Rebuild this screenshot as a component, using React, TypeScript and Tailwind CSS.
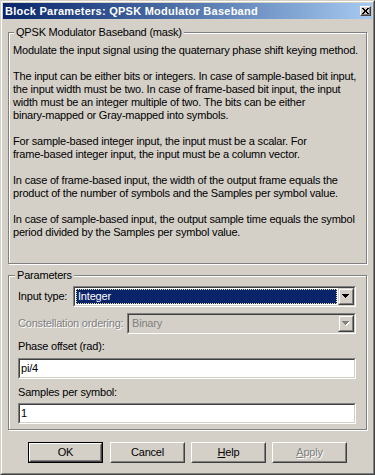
import React from "react";

function Arrow({ disabled }: { disabled?: boolean }) {
  const rows = [
    [0, 7],
    [1, 5],
    [2, 3],
    [3, 1],
  ];
  return (
    <svg width="8" height="5" viewBox="0 0 8 5" shapeRendering="crispEdges">
      {disabled &&
        rows.map(([x, w], i) => (
          <rect key={"s" + i} x={x + 1} y={i + 1} width={w} height={1} fill="#ffffff" />
        ))}
      {rows.map(([x, w], i) => (
        <rect key={i} x={x} y={i} width={w} height={1} fill={disabled ? "#808080" : "#000000"} />
      ))}
    </svg>
  );
}

function CloseGlyph() {
  const rows = [
    [[0, 2], [5, 2]],
    [[1, 2], [4, 2]],
    [[2, 3]],
    [[2, 3]],
    [[1, 2], [4, 2]],
    [[0, 2], [5, 2]],
  ];
  return (
    <svg width="7" height="6" viewBox="0 0 7 6" shapeRendering="crispEdges">
      {rows.map((segs, y) =>
        segs.map(([x, w], j) => <rect key={y + "-" + j} x={x} y={y} width={w} height={1} fill="#000" />)
      )}
    </svg>
  );
}

function Sunken({ className, children, inner }: { className?: string; children?: React.ReactNode; inner?: string }) {
  return (
    <div className={"border border-t-[#808080] border-l-[#808080] border-b-white border-r-white " + (className || "")}>
      <div className={"w-full h-full border border-t-[#404040] border-l-[#404040] border-b-[#d4d0c8] border-r-[#d4d0c8] flex items-center " + (inner || "")}>
        {children}
      </div>
    </div>
  );
}

function ComboButton({ disabled }: { disabled?: boolean }) {
  return (
    <div className="w-[16px] h-full border border-t-[#d4d0c8] border-l-[#d4d0c8] border-b-[#404040] border-r-[#404040] shrink-0">
      <div className="w-full h-full border border-t-white border-l-white border-b-[#808080] border-r-[#808080] bg-[#d4d0c8] flex items-center justify-center">
        <Arrow disabled={disabled} />
      </div>
    </div>
  );
}

function Button({ children, isDefault, disabled }: { children: React.ReactNode; isDefault?: boolean; disabled?: boolean }) {
  const core = (
    <div className="w-full h-full border border-t-white border-l-white border-b-[#404040] border-r-[#404040]">
      <div className={"w-full h-full border border-t-[#d4d0c8] border-l-[#d4d0c8] border-b-[#808080] border-r-[#808080] flex items-center justify-center " + (disabled ? "text-[#808080] [text-shadow:1px_1px_0_#ffffff]" : "")}>
        {children}
      </div>
    </div>
  );
  return isDefault ? (
    <div className="w-[75px] h-[21px] border border-black shrink-0">{core}</div>
  ) : (
    <div className="w-[75px] h-[21px] shrink-0">{core}</div>
  );
}

const Line = ({ children }: { children?: React.ReactNode }) => (
  <div className="h-[13px] leading-[13px] whitespace-nowrap">{children}</div>
);

export default function App() {
  return (
    <div className="w-[375px] h-[475px] bg-[#d4d0c8] font-['Liberation_Sans',Arial,sans-serif] text-[11px] tracking-[-0.2px] text-black select-none">
      <div className="w-full h-full border border-t-[#d4d0c8] border-l-[#d4d0c8] border-b-[#404040] border-r-[#404040]">
        <div className="w-full h-full border border-t-white border-l-white border-b-[#808080] border-r-[#808080] p-[1px] flex flex-col">
          {/* Title bar */}
          <div className="h-[16px] shrink-0 flex items-center bg-linear-to-r from-[#0a246a] to-[#a6caf0] pl-[2px] pr-[1px]">
            <span className="flex-1 text-white font-bold tracking-[0.25px] leading-[16px] whitespace-nowrap">
              Block Parameters: QPSK Modulator Baseband
            </span>
            <div className="w-[11px] h-[10px] border border-t-white border-l-white border-b-[#404040] border-r-[#404040]">
              <div className="w-full h-full border-b border-r border-b-[#808080] border-r-[#808080] bg-[#d4d0c8] flex items-center justify-center">
                <CloseGlyph />
              </div>
            </div>
          </div>

          {/* Group 1 */}
          <div className="ml-[5px] mt-[13px] w-[359px] h-[232px] shrink-0 border border-[#808080] shadow-[inset_1px_1px_0_#ffffff,1px_1px_0_#ffffff] flex flex-col">
            <span className="self-start ml-[5px] -mt-[7px] px-[2px] bg-[#d4d0c8] leading-[13px] h-[13px] whitespace-nowrap">
              QPSK Modulator Baseband (mask)
            </span>
            <div className="pl-[4px] mt-[5px]">
              <Line>Modulate the input signal using the quaternary phase shift keying method.</Line>
              <Line />
              <Line>The input can be either bits or integers. In case of sample-based bit input,</Line>
              <Line>the input width must be two. In case of frame-based bit input, the input</Line>
              <Line>width must be an integer multiple of two. The bits can be either</Line>
              <Line>binary-mapped or Gray-mapped into symbols.</Line>
              <Line />
              <Line>For sample-based integer input, the input must be a scalar. For</Line>
              <Line>frame-based integer input, the input must be a column vector.</Line>
              <Line />
              <Line>In case of frame-based input, the width of the output frame equals the</Line>
              <Line>product of the number of symbols and the Samples per symbol value.</Line>
              <Line />
              <Line>In case of sample-based input, the output sample time equals the symbol</Line>
              <Line>period divided by the Samples per symbol value.</Line>
            </div>
          </div>

          {/* Group 2 */}
          <div className="ml-[5px] mt-[11px] w-[359px] h-[155px] shrink-0 border border-[#808080] shadow-[inset_1px_1px_0_#ffffff,1px_1px_0_#ffffff] flex flex-col">
            <span className="self-start ml-[6px] -mt-[7px] px-[2px] bg-[#d4d0c8] leading-[13px] h-[13px] whitespace-nowrap">
              Parameters
            </span>
            <div className="pl-[9px] flex flex-col">
              <div className="mt-[4px] flex items-center h-[21px]">
                <span className="w-[55px] shrink-0 whitespace-nowrap">Input type:</span>
                <Sunken className="w-[283px] h-[21px]" inner="bg-white">
                  <div className="flex-1 h-full p-[1px]">
                    <div className="w-full h-full bg-[#0a246a] border border-dotted border-[#e8e0a0] text-white leading-[13px] pl-[1px] flex items-center">
                      Integer
                    </div>
                  </div>
                  <ComboButton />
                </Sunken>
              </div>
              <div className="mt-[6px] flex items-center h-[21px]">
                <span className="w-[109px] shrink-0 whitespace-nowrap text-[#808080] [text-shadow:1px_1px_0_#ffffff]">
                  Constellation ordering:
                </span>
                <Sunken className="w-[229px] h-[21px]" inner="bg-[#d4d0c8]">
                  <div className="flex-1 h-full pl-[3px] flex items-center text-[#808080]">Binary</div>
                  <ComboButton disabled />
                </Sunken>
              </div>
              <div className="mt-[6px] h-[13px] leading-[13px] whitespace-nowrap">Phase offset (rad):</div>
              <Sunken className="mt-[5px] w-[338px] h-[21px]" inner="bg-white pl-[1px]">
                pi/4
              </Sunken>
              <div className="mt-[7px] h-[13px] leading-[13px] whitespace-nowrap">Samples per symbol:</div>
              <Sunken className="mt-[4px] w-[338px] h-[21px]" inner="bg-white pl-[1px]">
                1
              </Sunken>
            </div>
          </div>

          {/* Buttons */}
          <div className="mt-[12px] flex">
            <div className="ml-[25px]">
              <Button isDefault>OK</Button>
            </div>
            <div className="ml-[7px]">
              <Button>Cancel</Button>
            </div>
            <div className="ml-[6px]">
              <Button>
                <span>
                  <span className="underline underline-offset-1">H</span>elp
                </span>
              </Button>
            </div>
            <div className="ml-[6px]">
              <Button disabled>
                <span>
                  <span className="underline underline-offset-1">A</span>pply
                </span>
              </Button>
            </div>
          </div>
        </div>
      </div>
    </div>
  );
}
